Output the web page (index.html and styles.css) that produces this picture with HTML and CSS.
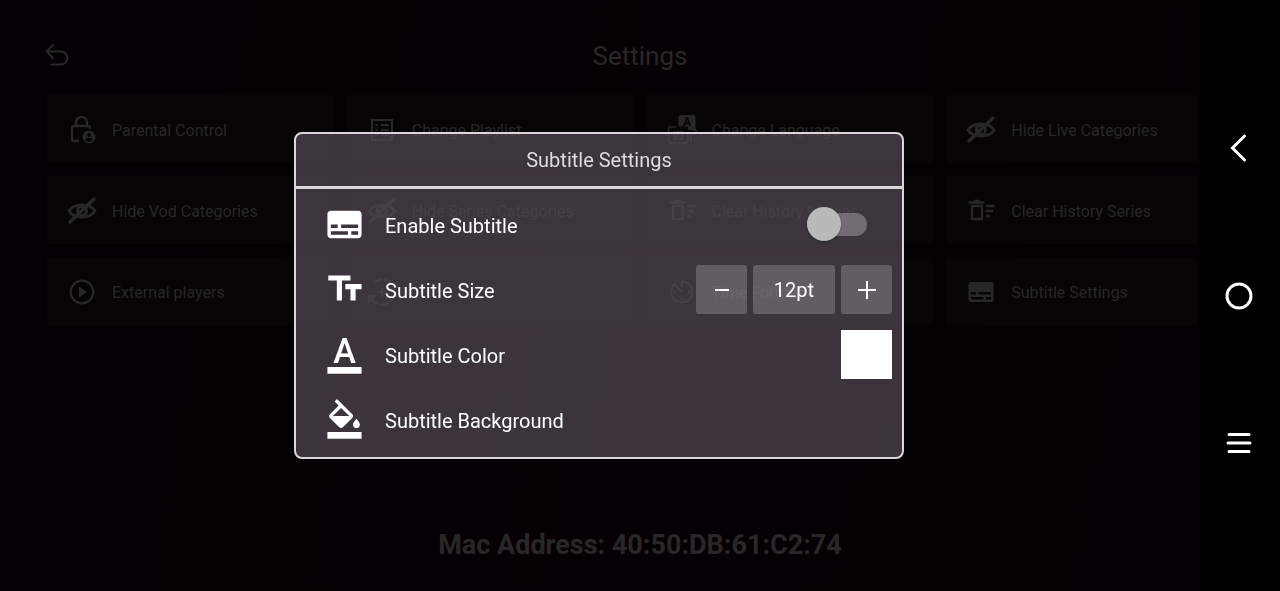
FILE: index.html
```
<!DOCTYPE html>
<html lang="en">
<head>
  <meta charset="UTF-8">
  <meta name="viewport" content="width=device-width, initial-scale=1">
  <title>Subtitle Settings</title>
  <link rel="stylesheet" href="styles.css">
</head>
<body>
  <!-- shared icons -->
  <svg class="sprite" aria-hidden="true">
    <symbol id="icon-hidden" viewBox="0 0 30 30">
      <path d="M2 15C7 7 23 7 28 15C23 23 7 23 2 15Z" fill="none" stroke="currentColor" stroke-width="3"/>
      <circle cx="15" cy="15" r="4.500" fill="none" stroke="currentColor" stroke-width="3"/>
      <path d="M3 26L27 3" stroke="currentColor" stroke-width="3.500" stroke-linecap="round"/>
    </symbol>
    <symbol id="icon-clear" viewBox="0 0 30 30">
      <path d="M6 10h10v13H6zM2.500 6.500h16M7.500 5h6M20 10h8.500M20 15h7M20 20h4" fill="none" stroke="currentColor" stroke-width="2.300"/>
    </symbol>
    <symbol id="icon-subtitles" viewBox="0 0 24 24">
      <path fill="currentColor" d="M20 4H4c-1.100 0-2 .9-2 2v12c0 1.100.9 2 2 2h16c1.100 0 2-.9 2-2V6c0-1.100-.9-2-2-2zM4 12h4v2H4v-2zm10 6H4v-2h10v2zm6 0h-4v-2h4v2zm0-4H10v-2h10v2z"/>
    </symbol>
  </svg>

  <main class="page">
    <header class="page-header">
      <button class="back-button" aria-label="Back">
        <svg viewBox="0 0 24 24"><path d="M8 1L1.500 7.500L8 14M2 7.500H16a6.500 6.500 0 0 1 0 13H6" fill="none" stroke="currentColor" stroke-width="2" stroke-linecap="round" stroke-linejoin="round"/></svg>
      </button>
      <h1>Settings</h1>
    </header>

    <div class="grid">
      <button class="card">
        <svg viewBox="0 0 30 30"><path d="M12 26H7a2 2 0 0 1-2-2V13a2 2 0 0 1 2-2H21a2 2 0 0 1 2 2v1M9 11V7.500a5 5 0 0 1 11 0V11" fill="none" stroke="currentColor" stroke-width="2.300"/><circle cx="22" cy="22" r="6.500" fill="currentColor"/><circle class="cut" cx="22" cy="20" r="2"/><path class="cut" d="M18 24.500c1-2.500 7-2.500 8 0c-2 3-6 3-8 0z"/></svg>
        <span>Parental Control</span>
      </button>
      <button class="card">
        <svg viewBox="0 0 30 30"><path d="M5 5h20v20H5zM8.500 10h2.500M8.500 15h2.500M8.500 20h2.500M14 10h8M14 15h8M14 20h8" fill="none" stroke="currentColor" stroke-width="2.200"/></svg>
        <span>Change Playlist</span>
      </button>
      <button class="card">
        <svg viewBox="0 0 30 30"><path d="M14 0h12a2.500 2.500 0 0 1 2.500 2.500V13l2 4L24 15h-3v-3.500H11.500V2.500A2.500 2.500 0 0 1 14 0z" fill="currentColor"/><path d="M9 12H3.500A2 2 0 0 0 1.500 14v12a2 2 0 0 0 2 2H19a2 2 0 0 0 2-2v-9M7 17h8v7H7zM6 25l9-9M24 20v7" fill="none" stroke="currentColor" stroke-width="1.500"/><text class="cut" x="16" y="11" font-size="12" font-weight="700">A</text></svg>
        <span>Change Language</span>
      </button>
      <button class="card">
        <svg><use href="#icon-hidden"/></svg>
        <span>Hide Live Categories</span>
      </button>
      <button class="card">
        <svg><use href="#icon-hidden"/></svg>
        <span>Hide Vod Categories</span>
      </button>
      <button class="card">
        <svg><use href="#icon-hidden"/></svg>
        <span>Hide Series Categories</span>
      </button>
      <button class="card">
        <svg><use href="#icon-clear"/></svg>
        <span>Clear History Movies</span>
      </button>
      <button class="card">
        <svg><use href="#icon-clear"/></svg>
        <span>Clear History Series</span>
      </button>
      <button class="card">
        <svg viewBox="0 0 30 30"><circle cx="15" cy="15" r="11.300" fill="none" stroke="currentColor" stroke-width="2.200"/><path d="M12 9.500l8 5.500l-8 5.500z" fill="currentColor"/></svg>
        <span>External players</span>
      </button>
      <button class="card" aria-label="Automatic">
        <svg viewBox="0 0 30 30"><path d="M7 5.500A12 12 0 0 1 27 15M27 18A12 12 0 0 1 5 22" fill="none" stroke="currentColor" stroke-width="2" stroke-dasharray="8 2.500"/><path d="M1 18h9l-9 9zM15 9l1.500 4.500L21 15l-4.500 1.500L15 21l-1.500-4.500L9 15l4.500-1.500z" fill="currentColor"/></svg>
      </button>
      <button class="card">
        <svg viewBox="0 0 30 30"><path d="M15 9V4.500A10.500 10.500 0 1 1 7.500 7.500L15 15" fill="none" stroke="currentColor" stroke-width="2"/><path d="M7 15h2M21 15h2M14 22h2" stroke="currentColor" stroke-width="2"/></svg>
        <span>Time Format</span>
      </button>
      <button class="card">
        <svg><use href="#icon-subtitles"/></svg>
        <span>Subtitle Settings</span>
      </button>
    </div>

    <p class="mac">Mac Address: 40:50:DB:61:C2:74</p>
  </main>

  <div class="overlay">
    <section class="dialog" role="dialog" aria-labelledby="dialogTitle">
      <h2 id="dialogTitle">Subtitle Settings</h2>
      <div class="rows">
        <div class="row">
          <svg><use href="#icon-subtitles"/></svg>
          <label class="name" for="enable">Enable Subtitle</label>
          <input class="switch" type="checkbox" id="enable">
        </div>
        <div class="row">
          <svg viewBox="0 0 24 24"><path d="M9 4v14.500M2.500 5.300h13M17 9v9.500M12.500 10.300h9.500" fill="none" stroke="currentColor" stroke-width="3"/></svg>
          <label class="name" for="size">Subtitle Size</label>
          <div class="stepper">
            <button id="minus" aria-label="Smaller"><svg viewBox="0 0 18 18"><path d="M2 9h14"/></svg></button>
            <output id="size">12pt</output>
            <button id="plus" aria-label="Larger"><svg viewBox="0 0 18 18"><path d="M0 9h18M9 0v18"/></svg></button>
          </div>
        </div>
        <div class="row">
          <svg viewBox="0 0 24 24"><text x="12" y="17" text-anchor="middle" font-size="20" font-weight="500" fill="currentColor">A</text><path d="M2 19.300h20v4H2z" fill="currentColor"/></svg>
          <label class="name" for="color">Subtitle Color</label>
          <input class="swatch" type="color" id="color" value="#ffffff">
        </div>
        <div class="row">
          <svg viewBox="0 0 24 24"><path fill="currentColor" d="M16.560 8.940 7.620 0 6.210 1.410l2.380 2.380-5.150 5.150c-.59.59-.59 1.540 0 2.120l5.500 5.500c.29.29.68.44 1.060.44s.77-.15 1.060-.44l5.500-5.500c.59-.58.59-1.530 0-2.120zM5.210 10 10 5.210 14.790 10H5.210zM19 11.500s-2 2.170-2 3.500c0 1.100.9 2 2 2s2-.9 2-2c0-1.330-2-3.500-2-3.500zM2 19.300h20v4H2z"/></svg>
          <span class="name">Subtitle Background</span>
        </div>
      </div>
    </section>
  </div>

  <nav class="navbar">
    <button aria-label="Back"><svg viewBox="0 0 30 30"><path d="M20.500 3L8.500 15l12 12"/></svg></button>
    <button aria-label="Home"><svg viewBox="0 0 30 30"><circle cx="15" cy="15" r="12"/></svg></button>
    <button aria-label="Recent apps"><svg viewBox="0 0 30 30"><path d="M5 6.500h20M4 15h22M5 23.500h20"/></svg></button>
  </nav>

  <script>
    const size = document.getElementById('size');
    let pt = 12;

    function changeSize(step) {
      pt = Math.max(6, pt + step);
      size.textContent = pt + 'pt';
    }

    document.getElementById('minus').onclick = () => changeSize(-1);
    document.getElementById('plus').onclick = () => changeSize(1);
  </script>
</body>
</html>
```
FILE: styles.css
```
* {
  box-sizing: border-box;
}

body {
  margin: 0;
  min-height: 100vh;
  background: #020002;
  font-family: Roboto, sans-serif;
  overflow: hidden;
}

button {
  border: none;
  padding: 0;
  background: none;
  color: inherit;
  font: inherit;
  cursor: pointer;
}

.sprite {
  display: none;
}

/* settings page, dimmed behind the dialog */
.page {
  min-height: 100vh;
  padding: 40px 47px 28px;
  display: flex;
  flex-direction: column;
  color: #282728;
  background: linear-gradient(100deg, transparent 15%, rgba(50, 0, 20, 0.08) 45%, transparent 90%);
}

.page-header {
  display: grid;
  grid-template-columns: 24px 1fr 24px;
  align-items: center;
  height: 32px;
  margin-bottom: 23px;
}

.back-button {
  height: 24px;
  margin-left: -4px;
}

.back-button svg {
  width: 24px;
  height: 24px;
}

h1 {
  margin: 0;
  font-size: 26px;
  line-height: 32px;
  font-weight: 400;
  text-align: center;
}

.grid {
  display: grid;
  grid-template-columns: repeat(4, 1fr);
  gap: 13px;
}

.card {
  display: flex;
  align-items: center;
  gap: 15px;
  height: 68px;
  padding: 2px 20px 0;
  border-radius: 2px;
  background: #060405;
  font-size: 16px;
  text-align: left;
}

.card svg {
  width: 30px;
  height: 30px;
  overflow: visible;
}

.cut {
  fill: #060405;
}

.mac {
  margin: auto 0 0;
  font-size: 27px;
  line-height: 36px;
  font-weight: 700;
  text-align: center;
}

/* dialog */
.overlay {
  position: fixed;
  inset: 0 82px 0 0;
  display: flex;
  align-items: center;
  justify-content: center;
}

.dialog {
  width: 100%;
  max-width: 610px;
  border: 2px solid #dad6da;
  border-radius: 8px;
  background: rgba(84, 74, 83, 0.7);
  color: #fff;
  font-size: 20px;
}

.dialog h2 {
  margin: 0;
  border-bottom: 3px solid #dad6da;
  color: #dedbde;
  font-size: 20px;
  line-height: 52px;
  font-weight: 400;
  text-align: center;
}

.rows {
  padding: 3px 0 5px;
}

.row {
  display: flex;
  align-items: center;
  height: 65px;
  padding: 0 10px 0 28px;
}

.row > svg {
  width: 41px;
  height: 41px;
  margin-right: 20px;
  overflow: visible;
}

.name {
  flex: 1;
  padding-top: 2px;
}

.switch {
  appearance: none;
  position: relative;
  width: 60px;
  height: 23px;
  margin: 0 25px 0 0;
  border-radius: 12px;
  background: #736c74;
  cursor: pointer;
}

.switch::before {
  content: "";
  position: absolute;
  left: 0;
  top: -6px;
  width: 34px;
  height: 34px;
  border-radius: 50%;
  background: #b9b9b9;
  box-shadow: 0 1px 2px rgba(0, 0, 0, 0.3);
}

.switch:checked::before {
  left: 26px;
}

.stepper {
  display: flex;
  gap: 6px;
}

.stepper button,
.stepper output {
  display: flex;
  align-items: center;
  justify-content: center;
  width: 51px;
  height: 49px;
  border-radius: 3px;
  background: rgba(255, 255, 255, 0.2);
}

.stepper output {
  width: 82px;
}

.stepper svg {
  width: 18px;
  height: 18px;
  stroke: #fff;
  stroke-width: 2;
}

.swatch {
  appearance: none;
  width: 51px;
  height: 49px;
  padding: 0;
  border: none;
  background: none;
}

.swatch::-webkit-color-swatch-wrapper {
  padding: 0;
}

.swatch::-webkit-color-swatch {
  border: none;
}

/* system navigation bar */
.navbar {
  position: fixed;
  inset: 0 0 0 auto;
  width: 82px;
  padding: 12.5vh 0;
  display: flex;
  flex-direction: column;
  background: #000;
}

.navbar button {
  flex: 1;
  display: flex;
  align-items: center;
  justify-content: center;
}

.navbar svg {
  width: 30px;
  height: 30px;
  fill: none;
  stroke: #fff;
  stroke-width: 3;
  stroke-linecap: round;
}
```
